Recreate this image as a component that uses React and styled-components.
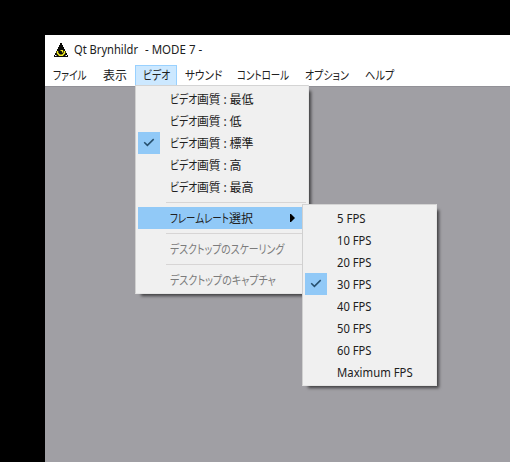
import React, { useLayoutEffect, useRef, useState } from "react";
import styled, { createGlobalStyle } from "styled-components";

const GlobalStyle = createGlobalStyle`
  * { box-sizing: border-box; }
  html, body { margin: 0; background: #000; overflow: hidden; }
  body { font-family: "Noto Sans", "Noto Sans CJK JP", sans-serif; font-size: 12px; color: #202020; }
`;

const Desktop = styled.div`
  width: 510px;
  height: 462px;
  padding: 35px 0 0 45px;
  background: #000;
  overflow: hidden;
`;
const Window = styled.main`
  height: 427px;
  display: flex;
  flex-direction: column;
  background: #a09fa4;
`;
const TitleBar = styled.header`
  height: 30px;
  flex: none;
  display: flex;
  align-items: center;
  padding-left: 9px;
  background: #fff;
`;
const Logo = styled.svg`
  width: 14px;
  height: 14px;
  margin-right: 6px;
`;
const Title = styled.h1`
  margin: 0;
  font-size: 12px;
  font-weight: 400;
  line-height: 20px;
  display: flex;
  gap: 7px;
`;
const MenuBar = styled.nav`
  height: 21px;
  flex: none;
  display: flex;
  background: #fff;
`;
const MenuTitle = styled.div`
  position: relative;
  width: ${(p) => p.$width}px;
  height: 21px;
  padding-left: ${(p) => (p.$open ? 7 : 8)}px;
  line-height: 19px;
  border: ${(p) => (p.$open ? "1px solid #99d1ff" : "0")};
  background: ${(p) => (p.$open ? "#cce8ff" : "transparent")};
  ${(p) => !p.$open && "padding-top: 1px;"}
`;
const Canvas = styled.section`
  flex: 1;
  border-top: 1px solid #929197;
`;
const Popup = styled.div`
  position: absolute;
  left: ${(p) => p.$left}px;
  top: ${(p) => p.$top}px;
  width: ${(p) => p.$width}px;
  padding: 2px;
  border: 1px solid;
  border-color: #d4d4d4 #e5e5e5 #e5e5e5 #d0d0d0;
  background: #f0f0f0;
  box-shadow: 4px 4px 3px -2px rgba(0, 0, 0, 0.6);
  z-index: 2;
`;
const Item = styled.div`
  height: 22px;
  display: flex;
  align-items: center;
  line-height: 22px;
  margin-right: ${(p) => (p.$active ? 1 : 0)}px;
  background: ${(p) => (p.$active ? "#91c9f7" : "transparent")};
  color: ${(p) => (p.$disabled ? "#7c7c7c" : "#202020")};
`;
const CheckCell = styled.span`
  width: 22px;
  height: 22px;
  flex: none;
  margin-right: 10px;
  display: grid;
  place-items: center;
  background: ${(p) => (p.$checked ? "#91c9f7" : "transparent")};
`;
const Separator = styled.div`
  height: 9px;
  margin-left: 28px;
  padding-top: 4px;
  &::after { content: ""; display: block; height: 1px; background: #d7d5d5; }
`;
const Arrow = styled.svg`
  width: 5px;
  height: 8px;
  margin: 0 10px 1px auto;
`;
const Caption = styled.span`
  display: flex;
  height: 22px;
  padding-top: 1px;
`;
const FitBox = styled.span`
  display: inline-block;
  width: ${(p) => p.$width}px;
  margin-left: ${(p) => p.$gap || 0}px;
  white-space: nowrap;
`;
const FitInner = styled.span`
  display: inline-block;
  transform-origin: 0 50%;
  font-feature-settings: "palt";
`;

/* Condenses its text to the given advance width. */
function Fit({ width, gap, children }) {
  const ref = useRef(null);
  const [scale, setScale] = useState(1);
  useLayoutEffect(() => {
    setScale(width / ref.current.offsetWidth);
  }, [width, children]);
  return (
    <FitBox $width={width} $gap={gap}>
      <FitInner ref={ref} style={{ transform: `scaleX(${scale})` }}>{children}</FitInner>
    </FitBox>
  );
}

function Check({ on }) {
  return (
    <CheckCell $checked={on}>
      {on && (
        <svg width="12" height="10" viewBox="0 0 12 10">
          <path d="M1.2 4.2 4.4 7.4 10.7 1.1" fill="none" stroke="#27506e" strokeWidth="1.5" />
        </svg>
      )}
    </CheckCell>
  );
}

const qualities = [["最低", 24], ["低", 12], ["標準", 24], ["高", 12], ["最高", 24]];
const rates = [["5 FPS", 28.5], ["10 FPS", 34.5], ["20 FPS", 34.5], ["30 FPS", 34.5], ["40 FPS", 34.5], ["50 FPS", 34.5], ["60 FPS", 34.5], ["Maximum FPS", 75.5]];

function FrameRateMenu() {
  return (
    <Popup $left={166} $top={118} $width={135}>
      {rates.map(([name, width]) => (
        <Item key={name}>
          <Check on={name === "30 FPS"} />
          <Caption><Fit width={width}>{name}</Fit></Caption>
        </Item>
      ))}
    </Popup>
  );
}

function VideoMenu() {
  return (
    <Popup $left={-1} $top={19} $width={174}>
      {qualities.map(([name, width]) => (
        <Item key={name}>
          <Check on={name === "標準"} />
          <Caption>
            <Fit width={27}>ビデオ</Fit>
            <Fit width={23.5}>画質</Fit>
            <Fit width={3} gap={3}>:</Fit>
            <Fit width={width} gap={3}>{name}</Fit>
          </Caption>
        </Item>
      ))}
      <Separator />
      <Item $active>
        <Check />
        <Caption>
          <Fit width={59}>フレームレート</Fit>
          <Fit width={24}>選択</Fit>
        </Caption>
        <Arrow viewBox="0 0 5 8"><path d="M0 0H1L5 4 1 8H0Z" fill="#000" /></Arrow>
      </Item>
      <Separator />
      <Item $disabled><Check /><Caption><Fit width={114}>デスクトップのスケーリング</Fit></Caption></Item>
      <Separator />
      <Item $disabled><Check /><Caption><Fit width={106}>デスクトップのキャプチャ</Fit></Caption></Item>
      <FrameRateMenu />
    </Popup>
  );
}

const menus = [
  ["ファイル", 50, 34], ["表示", 40, 24], ["ビデオ", 42, 27], ["サウンド", 52, 37],
  ["コントロール", 68, 52], ["オプション", 60, 44], ["ヘルプ", 45, 29],
];

export default function App() {
  return (
    <Desktop>
      <GlobalStyle />
      <Window>
        <TitleBar>
          <Logo viewBox="0 0 14 14">
            <path d="M6 0H8V2H9V4H10V6H11V8H12V10H13V12H14V14H0V12H1V10H2V8H3V6H4V4H5V2H6Z" fill="#0c0c08" />
            <path d="M1 12.5H2.5M11.5 12.5H13" stroke="#fff" strokeWidth="1" />
            <path d="M3.5 8V10L5.5 12.2H8.5L10.5 10V8" fill="none" stroke="#f6f022" strokeWidth="1.5" />
            <path d="M6.5 7.5H8.5V9.5" fill="none" stroke="#f6f022" strokeWidth="1.2" />
          </Logo>
          <Title>
            <Fit width={64}>Qt Brynhildr</Fit>
            <Fit width={57.5}>- MODE 7 -</Fit>
          </Title>
        </TitleBar>
        <MenuBar>
          {menus.map(([name, width, textWidth]) => (
            <MenuTitle key={name} $width={width} $open={name === "ビデオ"}>
              <Fit width={textWidth}>{name}</Fit>
              {name === "ビデオ" && <VideoMenu />}
            </MenuTitle>
          ))}
        </MenuBar>
        <Canvas />
      </Window>
    </Desktop>
  );
}
